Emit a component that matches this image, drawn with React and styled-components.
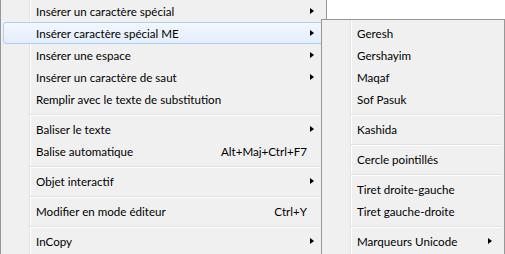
import React from 'react';
import styled, { createGlobalStyle } from 'styled-components';

const Global = createGlobalStyle`
  html, body {
    margin: 0;
    padding: 0;
    background: #fff;
    overflow: hidden;
  }
  body {
    font-family: Lato, "Liberation Sans", sans-serif;
    font-size: 11.6px;
    color: #000;
  }
`;

const Stage = styled.div`
  position: relative;
  width: 505px;
  height: 254px;
  overflow: hidden;
`;

const Menu = styled.ul`
  list-style: none;
  margin: 0;
  padding: 0 2px 2px;
  box-sizing: border-box;
  width: ${(p) => p.width}px;
  border: 1px solid #979797;
  border-top: ${(p) => (p.cut ? 'none' : '1px solid #979797')};
  padding-top: ${(p) => (p.cut ? 0 : 2)}px;
  background:
    linear-gradient(to right,
      transparent 28px, #e2e3e3 28px, #e2e3e3 29px,
      #fff 29px, #fff 30px, transparent 30px),
    #f0f0f0;
`;

const SubMenu = styled(Menu)`
  position: absolute;
  left: 321px;
  top: 19px;
  box-shadow: 2px 2px 3px rgba(0, 0, 0, 0.18);
`;

const Item = styled.li`
  position: relative;
  display: flex;
  align-items: center;
  height: 22px;
  box-sizing: border-box;
  padding: 0 9px 0 32px;
  border: 1px solid ${(p) => (p.active ? '#aecff7' : 'transparent')};
  border-radius: 3px;
  background: ${(p) =>
    p.active ? 'linear-gradient(#f2f7fe, #e4eefb)' : 'transparent'};
  white-space: nowrap;
`;

const Label = styled.span`
  flex: 1;
`;

const Shortcut = styled.span`
  margin-right: 7px;
`;

const Arrow = styled.span`
  width: 0;
  height: 0;
  border-top: 3.5px solid transparent;
  border-bottom: 3.5px solid transparent;
  border-left: 4px solid #000;
`;

const Separator = styled.li`
  height: 8px;
  margin-left: 27px;
  position: relative;
  &::before {
    content: '';
    position: absolute;
    left: 0;
    right: 0;
    top: 4px;
    height: 1px;
    background: #e0e0e0;
    border-bottom: 1px solid #fff;
  }
`;

const main = [
  { label: 'Insérer un caractère spécial', sub: true },
  { label: 'Insérer caractère spécial ME', sub: true, active: true },
  { label: 'Insérer une espace', sub: true },
  { label: 'Insérer un caractère de saut', sub: true },
  { label: 'Remplir avec le texte de substitution' },
  '-',
  { label: 'Baliser le texte', sub: true },
  { label: 'Balise automatique', key: 'Alt+Maj+Ctrl+F7' },
  '-',
  { label: 'Objet interactif', sub: true },
  '-',
  { label: 'Modifier en mode éditeur', key: 'Ctrl+Y' },
  '-',
  { label: 'InCopy', sub: true },
];

const special = [
  { label: 'Geresh' },
  { label: 'Gershayim' },
  { label: 'Maqaf' },
  { label: 'Sof Pasuk' },
  '-',
  { label: 'Kashida' },
  '-',
  { label: 'Cercle pointillés' },
  '-',
  { label: 'Tiret droite-gauche' },
  { label: 'Tiret gauche-droite' },
  '-',
  { label: 'Marqueurs Unicode', sub: true },
];

const renderItems = (items) =>
  items.map((it, i) =>
    it === '-' ? (
      <Separator key={i} />
    ) : (
      <Item key={i} active={it.active}>
        <Label>{it.label}</Label>
        {it.key && <Shortcut>{it.key}</Shortcut>}
        {it.sub && <Arrow />}
      </Item>
    )
  );

export default function App() {
  return (
    <Stage>
      <Global />
      <Menu width={327} cut>
        {renderItems(main)}
      </Menu>
      <SubMenu width={184}>{renderItems(special)}</SubMenu>
    </Stage>
  );
}
